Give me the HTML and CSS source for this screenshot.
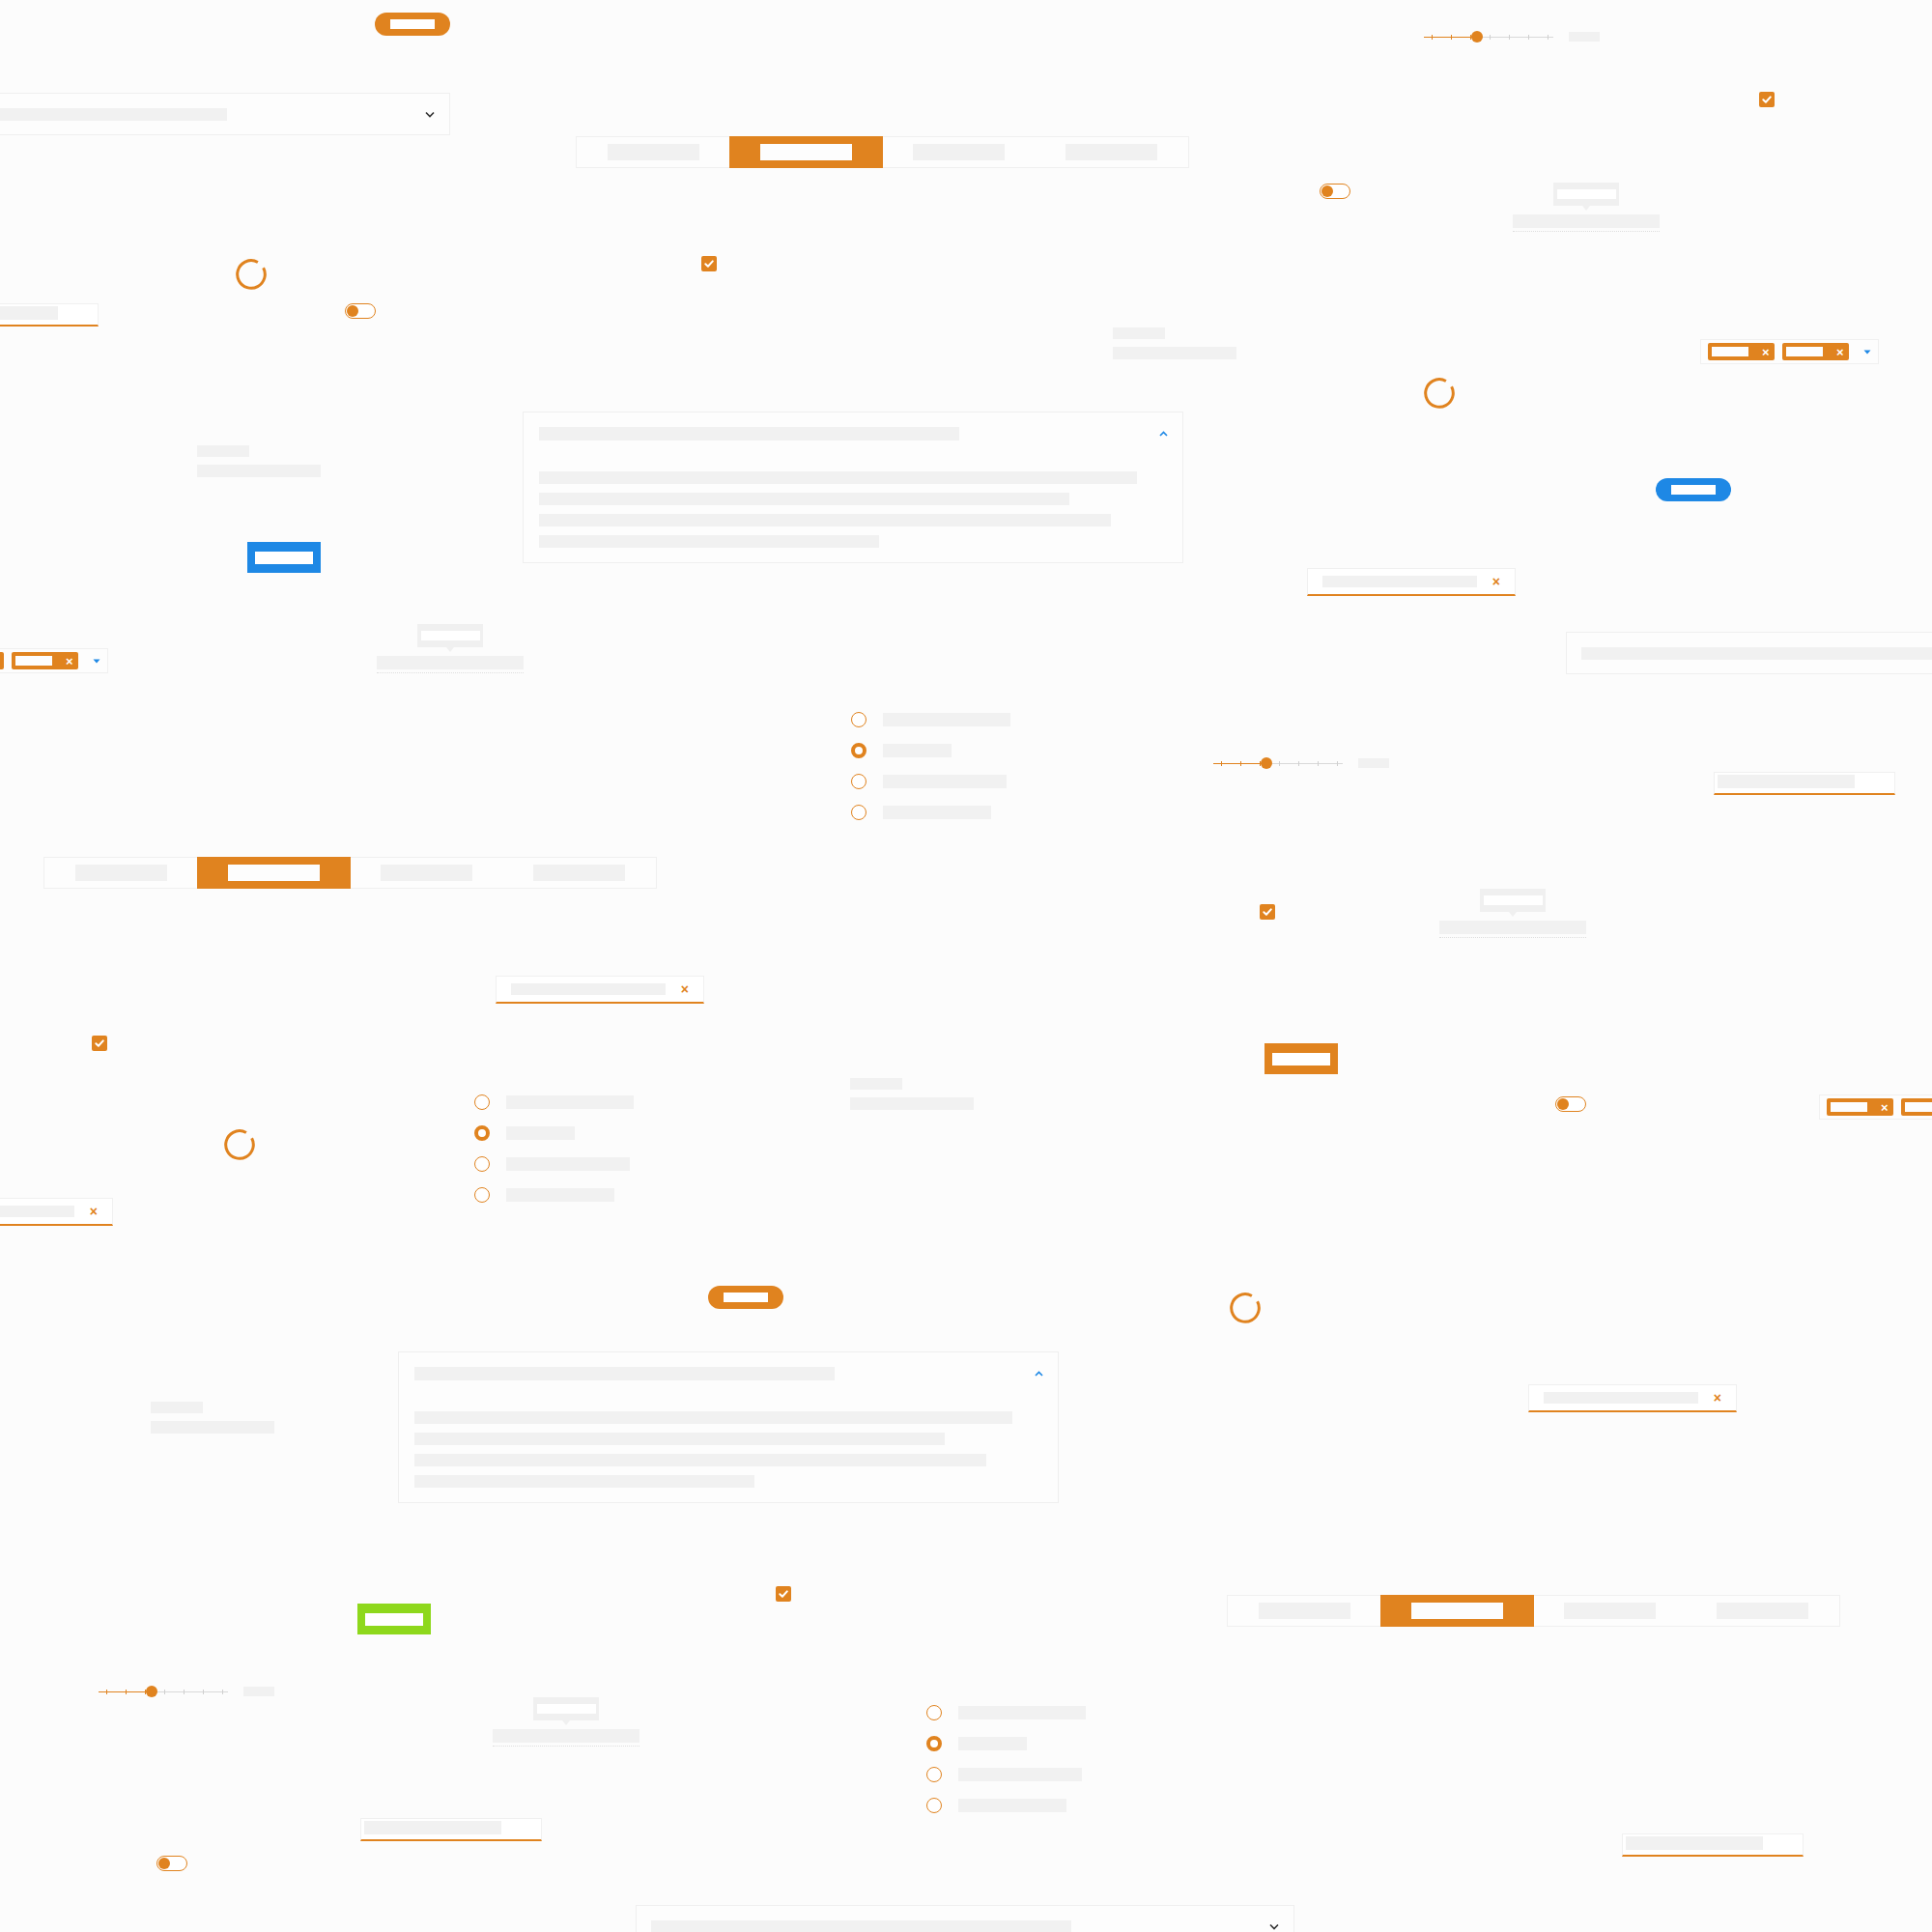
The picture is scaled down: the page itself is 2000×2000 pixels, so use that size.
FILE: index.html
```html
<!DOCTYPE html>
<html lang="en">
<head>
<meta charset="utf-8">
<title>Widget canvas</title>
<link rel="stylesheet" href="styles.css">
</head>
<body>
<div class="canvas">

  <!-- pill buttons -->
  <div class="w pill orange" style="left:388px;top:13px"><span class="wbar"></span></div>
  <div class="w pill orange" style="left:733px;top:1331px"><span class="wbar"></span></div>
  <div class="w pill blue" style="left:1714px;top:495px"><span class="wbar"></span></div>

  <!-- rect buttons -->
  <div class="w rbtn blue" style="left:256px;top:561px"><span class="wbar"></span></div>
  <div class="w rbtn orange" style="left:1309px;top:1080px"><span class="wbar"></span></div>
  <div class="w rbtn green" style="left:370px;top:1660px"><span class="wbar"></span></div>

  <!-- dropdowns -->
  <div class="w dropdown" style="left:-216px;top:96px">
    <span class="gbar dd-bar"></span>
    <svg class="chev" width="10" height="7" viewBox="0 0 10 7"><path d="M1 1.5 5 5.5 9 1.5" fill="none" stroke="#333" stroke-width="1.6"/></svg>
  </div>
  <div class="w dropdown" style="left:658px;top:1972px">
    <span class="gbar dd-bar"></span>
    <svg class="chev" width="10" height="7" viewBox="0 0 10 7"><path d="M1 1.5 5 5.5 9 1.5" fill="none" stroke="#333" stroke-width="1.6"/></svg>
  </div>
  <div class="w dropdown" style="left:1621px;top:654px">
    <span class="gbar dd-bar"></span>
    <svg class="chev" width="10" height="7" viewBox="0 0 10 7"><path d="M1 1.5 5 5.5 9 1.5" fill="none" stroke="#333" stroke-width="1.6"/></svg>
  </div>

  <!-- tabs -->
  <div class="w tabs" style="left:596px;top:141px">
    <div class="tab"><span class="gbar tbar"></span></div>
    <div class="tab active"><span class="tbar wfill"></span></div>
    <div class="tab"><span class="gbar tbar"></span></div>
    <div class="tab"><span class="gbar tbar"></span></div>
  </div>
  <div class="w tabs" style="left:45px;top:887px">
    <div class="tab"><span class="gbar tbar"></span></div>
    <div class="tab active"><span class="tbar wfill"></span></div>
    <div class="tab"><span class="gbar tbar"></span></div>
    <div class="tab"><span class="gbar tbar"></span></div>
  </div>
  <div class="w tabs" style="left:1270px;top:1651px">
    <div class="tab"><span class="gbar tbar"></span></div>
    <div class="tab active"><span class="tbar wfill"></span></div>
    <div class="tab"><span class="gbar tbar"></span></div>
    <div class="tab"><span class="gbar tbar"></span></div>
  </div>

  <!-- sliders -->
  <div class="w slider" style="left:1474px;top:32px">
    <div class="track"><span class="fill"></span><i style="left:8px"></i><i style="left:28px"></i><i style="left:48px"></i><i style="left:68px"></i><i style="left:88px"></i><i style="left:108px"></i><i style="left:128px"></i><span class="knob"></span></div>
    <span class="gbar slabel"></span>
  </div>
  <div class="w slider" style="left:1256px;top:784px">
    <div class="track"><span class="fill"></span><i style="left:8px"></i><i style="left:28px"></i><i style="left:48px"></i><i style="left:68px"></i><i style="left:88px"></i><i style="left:108px"></i><i style="left:128px"></i><span class="knob"></span></div>
    <span class="gbar slabel"></span>
  </div>
  <div class="w slider" style="left:102px;top:1745px">
    <div class="track"><span class="fill"></span><i style="left:8px"></i><i style="left:28px"></i><i style="left:48px"></i><i style="left:68px"></i><i style="left:88px"></i><i style="left:108px"></i><i style="left:128px"></i><span class="knob"></span></div>
    <span class="gbar slabel"></span>
  </div>

  <!-- checkboxes -->
  <div class="w check" style="left:726px;top:265px"><svg width="16" height="16" viewBox="0 0 16 16"><path d="M4.3 8.2 6.9 10.7 11.8 5.4" fill="none" stroke="#fff" stroke-width="2" stroke-linecap="round" stroke-linejoin="round"/></svg></div>
  <div class="w check" style="left:1821px;top:95px"><svg width="16" height="16" viewBox="0 0 16 16"><path d="M4.3 8.2 6.9 10.7 11.8 5.4" fill="none" stroke="#fff" stroke-width="2" stroke-linecap="round" stroke-linejoin="round"/></svg></div>
  <div class="w check" style="left:1304px;top:936px"><svg width="16" height="16" viewBox="0 0 16 16"><path d="M4.3 8.2 6.9 10.7 11.8 5.4" fill="none" stroke="#fff" stroke-width="2" stroke-linecap="round" stroke-linejoin="round"/></svg></div>
  <div class="w check" style="left:95px;top:1072px"><svg width="16" height="16" viewBox="0 0 16 16"><path d="M4.3 8.2 6.9 10.7 11.8 5.4" fill="none" stroke="#fff" stroke-width="2" stroke-linecap="round" stroke-linejoin="round"/></svg></div>
  <div class="w check" style="left:803px;top:1642px"><svg width="16" height="16" viewBox="0 0 16 16"><path d="M4.3 8.2 6.9 10.7 11.8 5.4" fill="none" stroke="#fff" stroke-width="2" stroke-linecap="round" stroke-linejoin="round"/></svg></div>

  <!-- toggles -->
  <div class="w toggle" style="left:357px;top:314px"><span class="tknob"></span></div>
  <div class="w toggle" style="left:1366px;top:190px"><span class="tknob"></span></div>
  <div class="w toggle" style="left:1610px;top:1135px"><span class="tknob"></span></div>
  <div class="w toggle" style="left:162px;top:1921px"><span class="tknob"></span></div>

  <!-- tooltips -->
  <div class="w tip" style="left:1566px;top:189px">
    <div class="bubble"><span class="bubble-bar"></span></div>
    <div class="gbar tip-bar"></div>
  </div>
  <div class="w tip" style="left:390px;top:646px">
    <div class="bubble"><span class="bubble-bar"></span></div>
    <div class="gbar tip-bar"></div>
  </div>
  <div class="w tip" style="left:1490px;top:920px">
    <div class="bubble"><span class="bubble-bar"></span></div>
    <div class="gbar tip-bar"></div>
  </div>
  <div class="w tip" style="left:510px;top:1757px">
    <div class="bubble"><span class="bubble-bar"></span></div>
    <div class="gbar tip-bar"></div>
  </div>

  <!-- tag pickers -->
  <div class="w tags" style="left:1760px;top:351px">
    <div class="tag"><span class="tag-bar"></span><span class="tag-x">×</span></div>
    <div class="tag"><span class="tag-bar"></span><span class="tag-x">×</span></div>
    <svg class="caret" width="8" height="5" viewBox="0 0 8 5"><path d="M0.5 0.5h7L4 4.5z" fill="#1e88e5"/></svg>
  </div>
  <div class="w tags" style="left:-73px;top:671px">
    <div class="tag"><span class="tag-bar"></span><span class="tag-x">×</span></div>
    <div class="tag"><span class="tag-bar"></span><span class="tag-x">×</span></div>
    <svg class="caret" width="8" height="5" viewBox="0 0 8 5"><path d="M0.5 0.5h7L4 4.5z" fill="#1e88e5"/></svg>
  </div>
  <div class="w tags" style="left:1883px;top:1133px">
    <div class="tag"><span class="tag-bar"></span><span class="tag-x">×</span></div>
    <div class="tag"><span class="tag-bar"></span><span class="tag-x">×</span></div>
    <svg class="caret" width="8" height="5" viewBox="0 0 8 5"><path d="M0.5 0.5h7L4 4.5z" fill="#1e88e5"/></svg>
  </div>

  <!-- spinners -->
  <svg class="w spin" style="left:244px;top:268px" width="32" height="32" viewBox="0 0 32 32"><circle cx="16" cy="16" r="14.3" fill="none" stroke="#e0831f" stroke-width="3" stroke-dasharray="81 9" transform="rotate(-28 16 16)"/></svg>
  <svg class="w spin" style="left:1474px;top:391px" width="32" height="32" viewBox="0 0 32 32"><circle cx="16" cy="16" r="14.3" fill="none" stroke="#e0831f" stroke-width="3" stroke-dasharray="81 9" transform="rotate(-28 16 16)"/></svg>
  <svg class="w spin" style="left:232px;top:1169px" width="32" height="32" viewBox="0 0 32 32"><circle cx="16" cy="16" r="14.3" fill="none" stroke="#e0831f" stroke-width="3" stroke-dasharray="81 9" transform="rotate(-28 16 16)"/></svg>
  <svg class="w spin" style="left:1273px;top:1338px" width="32" height="32" viewBox="0 0 32 32"><circle cx="16" cy="16" r="14.3" fill="none" stroke="#e0831f" stroke-width="3" stroke-dasharray="81 9" transform="rotate(-28 16 16)"/></svg>

  <!-- label / value pairs -->
  <div class="w pair" style="left:1152px;top:339px"><span class="gbar p-label"></span><span class="gbar p-value"></span></div>
  <div class="w pair" style="left:204px;top:461px"><span class="gbar p-label"></span><span class="gbar p-value"></span></div>
  <div class="w pair" style="left:880px;top:1116px"><span class="gbar p-label"></span><span class="gbar p-value"></span></div>
  <div class="w pair" style="left:156px;top:1451px"><span class="gbar p-label"></span><span class="gbar p-value"></span></div>

  <!-- accordions -->
  <div class="w accordion" style="left:541px;top:426px">
    <div class="acc-head"><span class="gbar acc-title"></span>
      <svg width="9" height="6" viewBox="0 0 9 6"><path d="M1 5 4.5 1.5 8 5" fill="none" stroke="#1e88e5" stroke-width="1.6"/></svg>
    </div>
    <div class="acc-body">
      <span class="gbar" style="width:619px"></span>
      <span class="gbar" style="width:549px"></span>
      <span class="gbar" style="width:592px"></span>
      <span class="gbar" style="width:352px"></span>
    </div>
  </div>
  <div class="w accordion" style="left:412px;top:1399px">
    <div class="acc-head"><span class="gbar acc-title"></span>
      <svg width="9" height="6" viewBox="0 0 9 6"><path d="M1 5 4.5 1.5 8 5" fill="none" stroke="#1e88e5" stroke-width="1.6"/></svg>
    </div>
    <div class="acc-body">
      <span class="gbar" style="width:619px"></span>
      <span class="gbar" style="width:549px"></span>
      <span class="gbar" style="width:592px"></span>
      <span class="gbar" style="width:352px"></span>
    </div>
  </div>

  <!-- clearable inputs -->
  <div class="w clear-input" style="left:1353px;top:588px"><span class="gbar ci-bar"></span><span class="ci-x">×</span></div>
  <div class="w clear-input" style="left:513px;top:1010px"><span class="gbar ci-bar"></span><span class="ci-x">×</span></div>
  <div class="w clear-input" style="left:-99px;top:1240px"><span class="gbar ci-bar"></span><span class="ci-x">×</span></div>
  <div class="w clear-input" style="left:1582px;top:1433px"><span class="gbar ci-bar"></span><span class="ci-x">×</span></div>

  <!-- underline inputs -->
  <div class="w u-input" style="left:-86px;top:314px"><span class="gbar ui-bar"></span></div>
  <div class="w u-input" style="left:1774px;top:799px"><span class="gbar ui-bar"></span></div>
  <div class="w u-input" style="left:373px;top:1882px"><span class="gbar ui-bar"></span></div>
  <div class="w u-input" style="left:1679px;top:1898px"><span class="gbar ui-bar"></span></div>

  <!-- radio groups -->
  <div class="w radios" style="left:881px;top:737px">
    <div class="radio"><span class="dot"></span><span class="gbar" style="width:132px"></span></div>
    <div class="radio"><span class="dot on"></span><span class="gbar" style="width:71px"></span></div>
    <div class="radio"><span class="dot"></span><span class="gbar" style="width:128px"></span></div>
    <div class="radio"><span class="dot"></span><span class="gbar" style="width:112px"></span></div>
  </div>
  <div class="w radios" style="left:491px;top:1133px">
    <div class="radio"><span class="dot"></span><span class="gbar" style="width:132px"></span></div>
    <div class="radio"><span class="dot on"></span><span class="gbar" style="width:71px"></span></div>
    <div class="radio"><span class="dot"></span><span class="gbar" style="width:128px"></span></div>
    <div class="radio"><span class="dot"></span><span class="gbar" style="width:112px"></span></div>
  </div>
  <div class="w radios" style="left:959px;top:1765px">
    <div class="radio"><span class="dot"></span><span class="gbar" style="width:132px"></span></div>
    <div class="radio"><span class="dot on"></span><span class="gbar" style="width:71px"></span></div>
    <div class="radio"><span class="dot"></span><span class="gbar" style="width:128px"></span></div>
    <div class="radio"><span class="dot"></span><span class="gbar" style="width:112px"></span></div>
  </div>

</div>
</body>
</html>
```

FILE: styles.css
```css
* { box-sizing: border-box; }
html, body { margin: 0; padding: 0; background: #fcfcfc; font-family: "Liberation Sans", Arial, sans-serif; }

.canvas { position: relative; width: 2000px; height: 2000px; overflow: hidden; background: #fcfcfc; }
.w { position: absolute; }

.gbar { display: block; background: #f1f1f1; height: 13px; }
.wbar { display: block; background: #fff; }

/* buttons */
.orange { background: #e0831f; }
.blue { background: #1e88e5; }
.green { background: #8ed81c; }

.pill { width: 78px; height: 24px; border-radius: 12px; display: flex; align-items: center; justify-content: center; }
.pill .wbar { width: 46px; height: 10px; }

.rbtn { width: 76px; height: 32px; display: flex; align-items: center; justify-content: center; }
.rbtn .wbar { width: 60px; height: 13px; }

/* dropdown */
.dropdown { width: 682px; height: 44px; border: 1px solid #efefef; background: #fdfdfd; display: flex; align-items: center; justify-content: space-between; padding: 0 15px 0 15px; }
.dd-bar { width: 435px; height: 13px; }
.chev { display: block; }

/* tabs */
.tabs { width: 635px; height: 33px; border: 1px solid #f0f0f0; background: #fdfdfd; display: grid; grid-template-columns: repeat(4, 1fr); }
.tab { display: flex; align-items: center; justify-content: center; }
.tab.active { background: #e0831f; margin: -1px 0; }
.tbar { width: 95px; height: 17px; }
.wfill { display: block; background: #fdfdfd; }

/* slider */
.slider { display: flex; align-items: center; height: 12px; }
.track { position: relative; width: 134px; height: 1px; background: #d8d8d8; }
.track .fill { position: absolute; left: 0; top: 0; width: 55px; height: 1px; background: #e0831f; }
.track i { position: absolute; top: -2px; width: 1px; height: 5px; background: #cfcfcf; }
.track i:nth-of-type(-n+3) { background: #e0831f; }
.track .knob { position: absolute; left: 49px; top: -6px; width: 12px; height: 12px; border-radius: 50%; background: #e0831f; }
.slabel { width: 32px; height: 10px; margin-left: 16px; }

/* checkbox */
.check { width: 16px; height: 16px; border-radius: 2px; background: #e0831f; }
.check svg { display: block; }

/* toggle */
.toggle { width: 32px; height: 16px; border: 1.5px solid #e0831f; border-radius: 8px; background: #fff; display: flex; align-items: center; padding-left: 1px; }
.tknob { width: 12px; height: 12px; border-radius: 50%; background: #e0831f; }

/* tooltip */
.tip { width: 152px; display: flex; flex-direction: column; align-items: center; }
.bubble { position: relative; width: 68px; height: 24px; background: #f0f0f0; display: flex; align-items: center; justify-content: center; }
.bubble::after { content: ""; position: absolute; left: 30px; bottom: -5px; border-left: 4px solid transparent; border-right: 4px solid transparent; border-top: 5px solid #f0f0f0; }
.bubble-bar { display: block; width: 61px; height: 10px; background: #fff; }
.tip-bar { width: 152px; height: 14px; margin-top: 9px; }
.tip::after { content: ""; display: block; width: 152px; margin-top: 3px; border-top: 1px dotted #dedede; }

/* tags */
.tags { width: 185px; height: 26px; border: 1px solid #f0f0f0; background: #fdfdfd; display: flex; align-items: center; gap: 8px; padding-left: 7px; }
.tag { width: 69px; height: 18px; border-radius: 2px; background: #e0831f; display: flex; align-items: center; padding-left: 4px; }
.tag-bar { display: block; width: 38px; height: 10px; background: #fdfdfd; }
.tag-x { color: #fff; font-weight: bold; font-size: 13px; line-height: 13px; margin-left: 14px; }
.caret { display: block; margin-left: 7px; }

/* spinner */
.spin { display: block; }

/* label/value */
.pair { display: flex; flex-direction: column; gap: 8px; }
.p-label { width: 54px; height: 12px; }
.p-value { width: 128px; height: 13px; }

/* accordion */
.accordion { width: 684px; height: 157px; border: 1px solid #efefef; background: #fdfdfd; padding: 15px 15px 0 16px; }
.acc-head { display: flex; justify-content: space-between; align-items: center; height: 14px; }
.acc-title { width: 435px; height: 14px; }
.acc-head svg { display: block; }
.acc-body { display: flex; flex-direction: column; gap: 9px; margin-top: 32px; }
.acc-body .gbar { height: 13px; }

/* clearable input */
.clear-input { width: 216px; height: 29px; border: 1px solid #f0f0f0; border-bottom: 2px solid #e0831f; background: #fff; display: flex; align-items: center; justify-content: space-between; padding: 0 15px 0 15px; }
.ci-bar { width: 160px; height: 12px; }
.ci-x { color: #e0831f; font-weight: bold; font-size: 14px; line-height: 14px; }

/* underline input */
.u-input { width: 188px; height: 24px; border: 1px solid #f0f0f0; border-bottom: 2px solid #e0831f; background: #fff; padding: 2px 0 0 3px; }
.ui-bar { width: 142px; height: 14px; }

/* radios */
.radios { display: flex; flex-direction: column; gap: 16px; }
.radio { display: flex; align-items: center; height: 16px; }
.dot { width: 16px; height: 16px; border-radius: 50%; border: 1.5px solid #e0831f; background: #fff; margin-right: 17px; }
.dot.on { border-width: 4px; }
.radio .gbar { height: 14px; }
```
